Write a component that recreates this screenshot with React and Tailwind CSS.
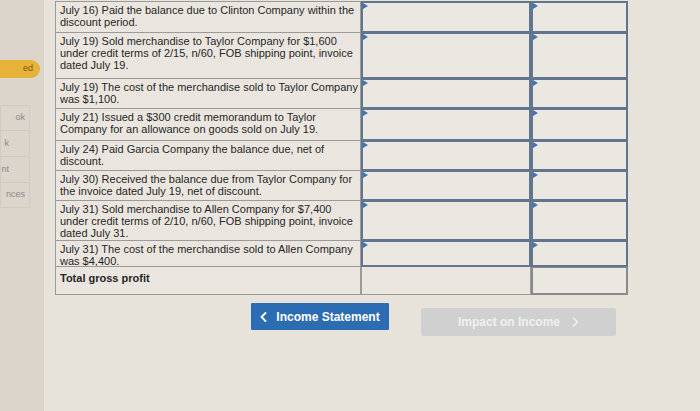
import React from "react";

const rows = [
  { h: "h-[32px]", lines: ["July 16) Paid the balance due to Clinton Company within the", "discount period."] },
  { h: "h-[47px]", lines: ["July 19) Sold merchandise to Taylor Company for $1,600", "under credit terms of 2/15, n/60, FOB shipping point, invoice", "dated July 19."] },
  { h: "h-[31px]", lines: ["July 19) The cost of the merchandise sold to Taylor Company", "was $1,100."] },
  { h: "h-[33px]", lines: ["July 21) Issued a $300 credit memorandum to Taylor", "Company for an allowance on goods sold on July 19."] },
  { h: "h-[31px]", lines: ["July 24) Paid Garcia Company the balance due, net of", "discount."] },
  { h: "h-[31px]", lines: ["July 30) Received the balance due from Taylor Company for", "the invoice dated July 19, net of discount."] },
  { h: "h-[41px]", lines: ["July 31) Sold merchandise to Allen Company for $7,400", "under credit terms of 2/10, n/60, FOB shipping point, invoice", "dated July 31."] },
  { h: "h-[27px]", lines: ["July 31) The cost of the merchandise sold to Allen Company", "was $4,400."] },
];

function InputCell({ w }) {
  return (
    <div className={`${w} relative border-2 border-[#62758f] bg-[#ebe8e2]`}>
      {/* dropdown marker */}
      <div className="absolute left-0 top-0 w-0 h-0 border-t-[3px] border-b-[3px] border-l-[5px] border-t-transparent border-b-transparent border-l-[#3f74b5]" />
    </div>
  );
}

function Sidebar() {
  return (
    <div className="w-[44px] shrink-0 bg-[#dcd5cb] flex flex-col text-[9px] text-[#8a8a8a]">
      <div className="mt-[60px] h-[18px] w-[40px] rounded-r-full bg-[#e6b23a] text-[#7a5a10] flex items-center justify-end pr-[7px]">ed</div>
      <div className="mt-[27px] w-[30px] border border-[#d2cbc1] flex flex-col">
        <div className="h-[25px] flex items-center justify-end pr-[4px] border-b border-[#d2cbc1]">ok</div>
        <div className="h-[26px] flex items-center justify-end pr-[20px] border-b border-[#d2cbc1]">k</div>
        <div className="h-[26px] flex items-center justify-end pr-[20px] border-b border-[#d2cbc1]">nt</div>
        <div className="h-[24px] flex items-center justify-end pr-[4px]">nces</div>
      </div>
    </div>
  );
}

export default function App() {
  return (
    <div
      className="w-[700px] h-[411px] overflow-hidden flex bg-[#e7e2da]"
      style={{ fontFamily: '"Liberation Sans", Arial, sans-serif' }}
    >
      <Sidebar />
      <div className="pl-[11px] pt-[1px] flex flex-col">
        {/* Table */}
        <div className="flex flex-col w-[573px]">
          {rows.map((r, i) => (
            <div key={i} className={`flex ${r.h} -mt-px first:mt-0`}>
              <div className="w-[306px] border border-[#9a9a9a] bg-[#eae6df] pl-[4px] pt-[2px] text-[11px] leading-[12px] text-[#262626] whitespace-nowrap">
                {r.lines.map((l, j) => (
                  <div key={j}>{l}</div>
                ))}
              </div>
              <InputCell w="w-[170px]" />
              <InputCell w="w-[97px]" />
            </div>
          ))}
          <div className="flex h-[29px] -mt-px">
            <div className="w-[306px] border border-[#9a9a9a] bg-[#eae6df] pl-[4px] pt-[5px] text-[11px] leading-[12px] font-bold text-[#262626]">
              Total gross profit
            </div>
            <div className="w-[170px] border border-[#9a9a9a] bg-[#eae6df]" />
            <div className="w-[97px] border-2 border-[#8a8a8a] bg-[#ebe8e2]" />
          </div>
        </div>

        {/* Nav buttons */}
        <div className="flex items-start mt-[8px] ml-[196px]">
          <button className="w-[138px] h-[27px] bg-[#2b6cb3] text-white text-[12px] font-bold flex items-center justify-center gap-[9px] rounded-[1px]">
            <svg width="7" height="10" viewBox="0 0 7 10" fill="none" stroke="white" strokeWidth="1.8" strokeLinecap="round" strokeLinejoin="round">
              <path d="M5.5 1 L1.5 5 L5.5 9" />
            </svg>
            <span>Income Statement</span>
          </button>
          <button className="ml-[32px] mt-[5px] w-[195px] h-[28px] bg-[#cfd0cf] text-[#eef0f2] text-[12px] font-bold flex items-center justify-center gap-[12px] rounded-[2px]">
            <span>Impact on Income</span>
            <svg width="7" height="10" viewBox="0 0 7 10" fill="none" stroke="#eef0f2" strokeWidth="1.6" strokeLinecap="round" strokeLinejoin="round">
              <path d="M1.5 1 L5.5 5 L1.5 9" />
            </svg>
          </button>
        </div>
      </div>
    </div>
  );
}
